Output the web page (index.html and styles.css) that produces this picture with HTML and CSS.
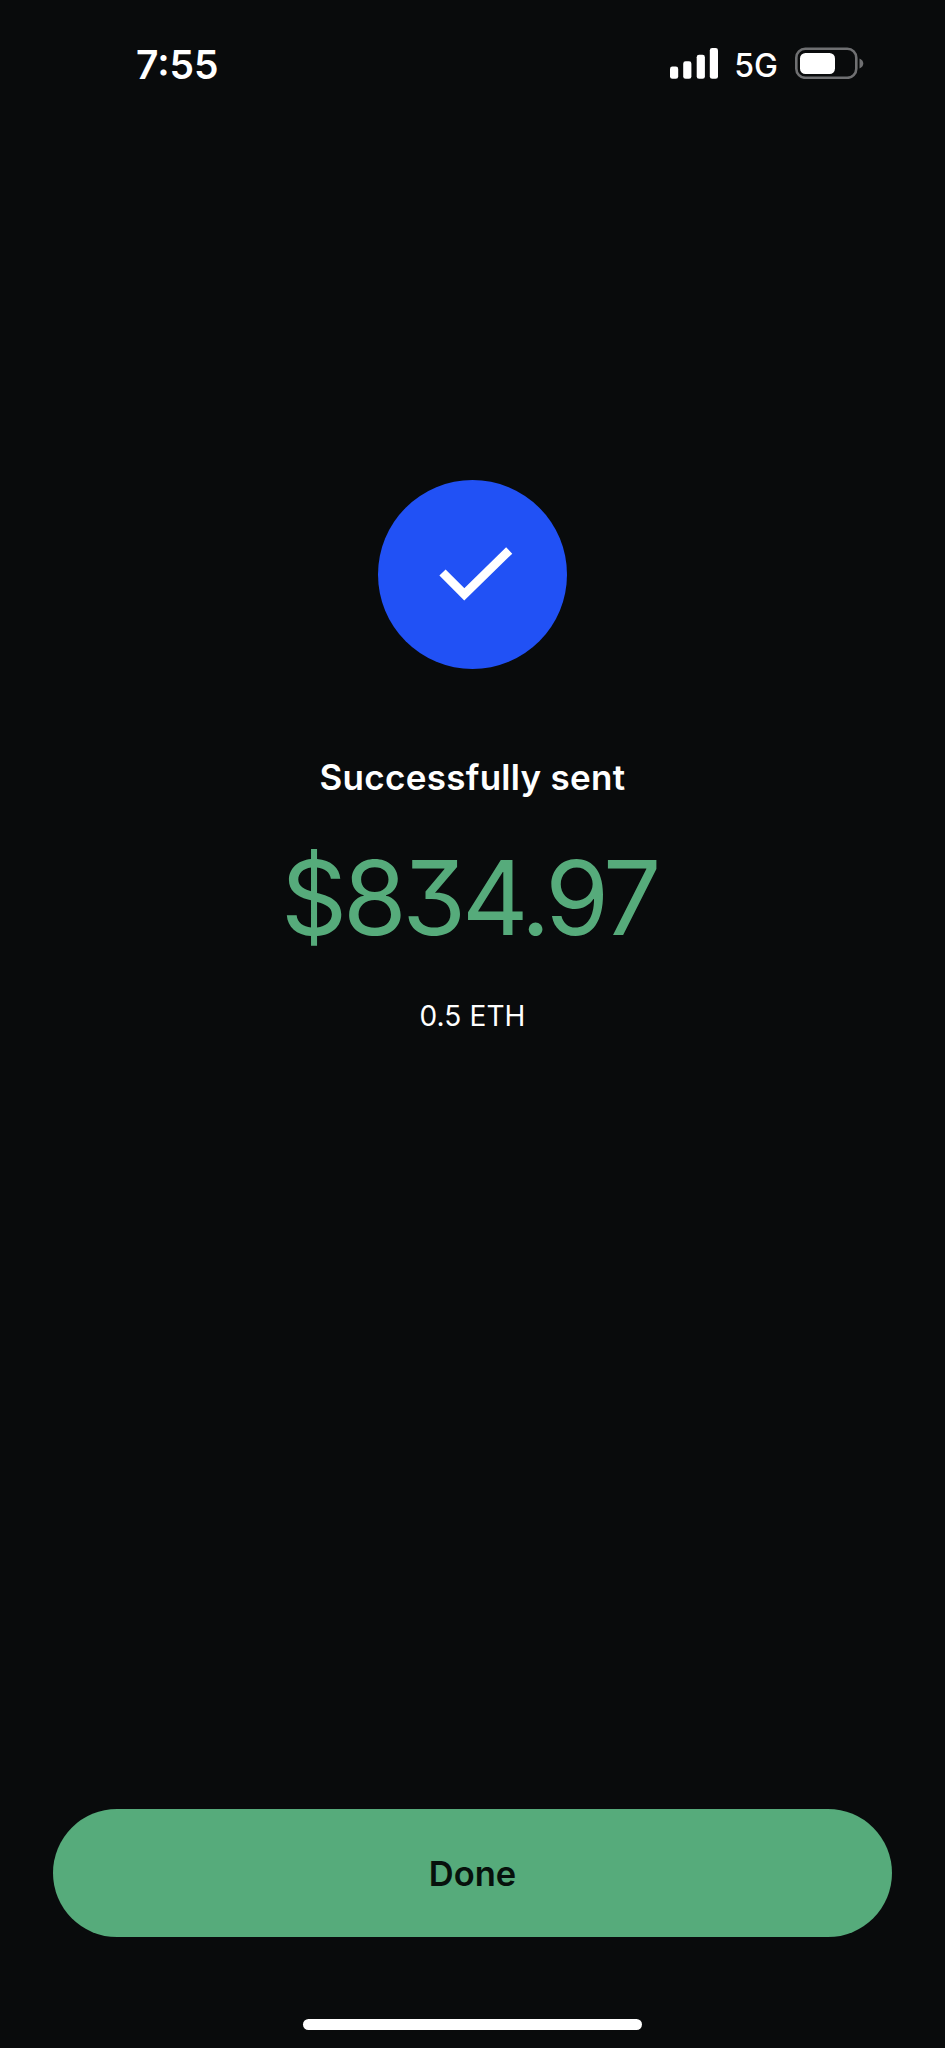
FILE: index.html
```html
<!DOCTYPE html>
<html lang="en">
<head>
    <meta charset="UTF-8">
    <meta name="viewport" content="width=device-width, initial-scale=1.0">
    <title>Successfully sent</title>
    <link rel="stylesheet" href="styles.css">
</head>
<body>

<div class="screen">
    <header class="status-bar">
        <span class="time">7:55</span>
        <div class="status-icons">
            <svg class="signal" width="49" height="32" viewBox="0 0 49 32" fill="#fff">
                <rect x="0" y="19.5" width="8.2" height="12.3" rx="2.4"/>
                <rect x="13.2" y="14.3" width="8.2" height="17.5" rx="2.4"/>
                <rect x="26.7" y="7.8" width="8.2" height="24" rx="2.4"/>
                <rect x="39.8" y="1" width="8.2" height="30.8" rx="2.4"/>
            </svg>
            <span class="network">5G</span>
            <svg class="battery" width="69" height="32" viewBox="0 0 69 32">
                <rect x="1.3" y="1.8" width="60" height="29" rx="9" fill="none" stroke="#6f7072" stroke-width="2.6"/>
                <rect x="5" y="6" width="35" height="21" rx="5.5" fill="#fff"/>
                <path d="M64.5 11.5c2.4 1 3.8 2.8 3.8 5s-1.4 4-3.8 5z" fill="#6f7072"/>
            </svg>
        </div>
    </header>

    <main class="result">
        <div class="badge">
            <svg width="189" height="189" viewBox="0 0 189 189">
                <path d="M64.5 92.5L86.3 114.300L131.2 70.5" fill="none" stroke="#fff" stroke-width="8.8"/>
            </svg>
        </div>
        <h1 class="title">Successfully sent</h1>
        <p class="amount">$834.97</p>
        <p class="crypto">0.5 ETH</p>
    </main>

    <footer class="actions">
        <button class="done-button">Done</button>
        <div class="home-indicator"></div>
    </footer>
</div>

</body>
</html>
```
FILE: styles.css
```css
* {
    box-sizing: border-box;
}
body {
    margin: 0;
    background-color: #090b0c;
    color: #fff;
    font-family: 'Inter', sans-serif;
}
.screen {
    display: flex;
    flex-direction: column;
    height: 2048px;
}
.status-bar {
    display: flex;
    justify-content: space-between;
    align-items: flex-start;
    height: 130px;
    padding: 47px 81px 0 136px;
}
.time {
    font-size: 39px;
    font-weight: 600;
    line-height: 36px;
}
.status-icons {
    display: flex;
    align-items: flex-start;
}
.network {
    margin: 3px 17px 0 15px;
    font-size: 32px;
    font-weight: 450;
    line-height: 32px;
}
/* Confirmation */
.result {
    flex: 1;
    display: flex;
    flex-direction: column;
    align-items: center;
    padding-top: 350px;
}
.badge {
    width: 189px;
    height: 189px;
    border-radius: 50%;
    background-color: #2151f5;
}
.badge svg {
    display: block;
}
.title {
    margin: 84px 0 0;
    font-size: 35px;
    font-weight: 600;
    line-height: 48px;
    letter-spacing: 0.3px;
}
.amount {
    margin: 37px 7px 0 0;
    color: #56ab7b;
    font-size: 103px;
    font-weight: 440;
    line-height: 120px;
    letter-spacing: -4.3px;
    font-feature-settings: "cv09";
}
.crypto {
    margin: 40px 0 0;
    font-size: 28px;
    line-height: 36px;
    letter-spacing: 0.1px;
}
/* Bottom area */
.actions {
    display: flex;
    flex-direction: column;
    align-items: center;
    padding: 0 53px 18px;
}
.done-button {
    width: 100%;
    height: 128px;
    padding: 0;
    border: none;
    border-radius: 64px;
    background-color: #56ab7b;
    color: #07110c;
    font-family: inherit;
    font-size: 34.5px;
    font-weight: 600;
    cursor: pointer;
}
.home-indicator {
    width: 339px;
    height: 11px;
    margin-top: 82px;
    border-radius: 6px;
    background-color: #fff;
}
```
